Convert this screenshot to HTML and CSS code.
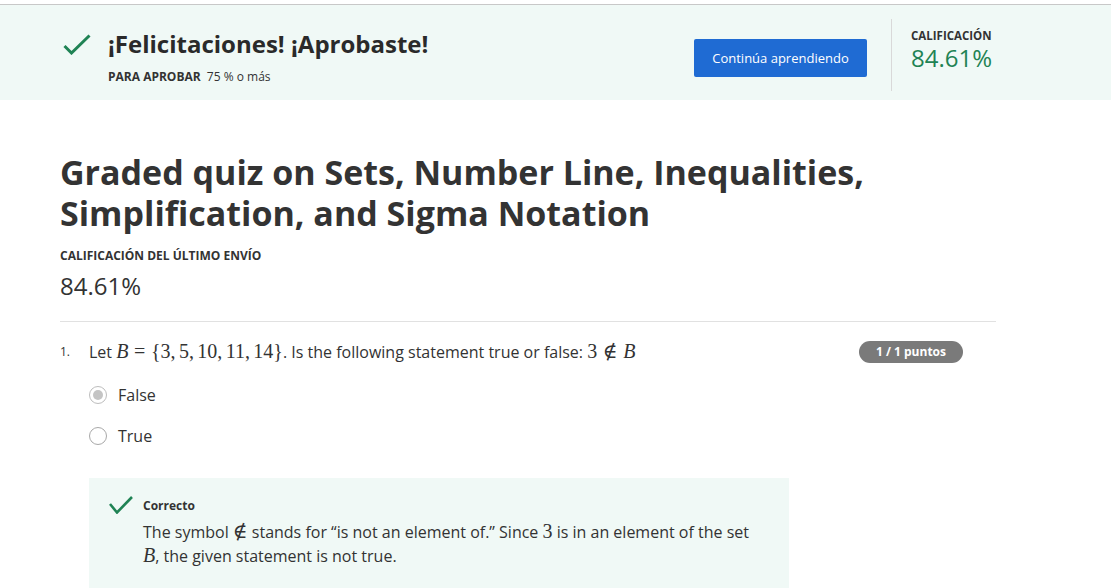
FILE: index.html
```html
<!DOCTYPE html>
<html lang="es">
<head>
<meta charset="utf-8">
<title>Graded quiz</title>
<link rel="stylesheet" href="styles.css">
</head>
<body>
<div class="topline"></div>
<header class="banner">
  <div class="banner-left">
    <svg class="check" width="28" height="21" viewBox="0 0 28 21"><path d="M1.5 12 L8.5 19 L26.5 1.5" fill="none" stroke="#1f8354" stroke-width="3"/></svg>
    <div>
      <h2 class="congrats">¡Felicitaciones! ¡Aprobaste!</h2>
      <div class="pass"><span class="label">PARA APROBAR</span> 75 % o más</div>
    </div>
  </div>
  <button class="btn">Continúa aprendiendo</button>
  <div class="grade">
    <div class="label">CALIFICACIÓN</div>
    <div class="grade-value">84.61%</div>
  </div>
</header>
<main class="content">
  <h1 class="title">Graded quiz on Sets, Number Line, Inequalities, Simplification, and Sigma Notation</h1>
  <div class="label last">CALIFICACIÓN DEL ÚLTIMO ENVÍO</div>
  <div class="last-value">84.61%</div>
  <hr class="sep">
  <section class="question">
    <div class="qnum">1.</div>
    <div class="qbody">
      <div class="qtext">Let <span class="m"><i>B</i><span class="rel">=</span>{3,<span class="th"></span>5,<span class="th"></span>10,<span class="th"></span>11,<span class="th"></span>14}</span>. Is the following statement true or false: <span class="m">3<span class="rel">∉</span><i>B</i></span></div>
      <div class="options">
        <label class="opt"><span class="radio sel"></span>False</label>
        <label class="opt"><span class="radio"></span>True</label>
      </div>
      <div class="feedback">
        <svg class="fcheck" width="24" height="18" viewBox="0 0 24 18"><path d="M1 8 L8 16.5 L23 1" fill="none" stroke="#1f8354" stroke-width="2.6"/></svg>
        <div>
          <div class="fhead">Correcto</div>
          <p class="ftext">The symbol <span class="m">∉</span> stands for “is not an element of.” Since <span class="m">3</span> is in an element of the set <span class="m"><i>B</i></span>, the given statement is not true.</p>
        </div>
      </div>
    </div>
    <div class="badge">1 / 1 puntos</div>
  </section>
</main>
</body>
</html>
```
FILE: styles.css
```css
* { box-sizing: border-box; }
body {
  margin: 0;
  font-family: "Open Sans", "Noto Sans", sans-serif;
  color: #1f1f1f;
  background: #fff;
  overflow: hidden;
}
.topline {
  height: 5px;
  border-bottom: 1px solid #c8c8c8;
}
.banner {
  background: #f0f9f6;
  height: 95px;
  display: flex;
  align-items: flex-start;
  padding: 0 0 0 60px;
}
.banner-left {
  display: flex;
  align-items: flex-start;
  gap: 17px;
  width: 634px;
  padding-top: 24px;
}
.check { margin: 5px 0 0 3px; flex-shrink: 0; }
.congrats {
  margin: 0;
  font-size: 24px;
  font-weight: 700;
  line-height: 30px;
  color: #2a2a2a;
}
.pass {
  margin-top: 10px;
  font-size: 12px;
  line-height: 16px;
  color: #333;
}
.label {
  font-size: 12px;
  font-weight: 700;
  color: #333;
}
.pass .label { margin-right: 3px; }
.btn {
  margin-top: 34px;
  width: 173px;
  height: 38px;
  background: #1f6bd3;
  color: #fff;
  border: none;
  border-radius: 2px;
  font-family: inherit;
  font-size: 13px;
  font-weight: 400;
}
.grade {
  margin-left: 24px;
  margin-top: 14px;
  height: 72px;
  border-left: 1px solid #d9d9d9;
  padding: 10px 0 0 19px;
}
.grade .label { line-height: 14px; font-size: 11.5px; }
.grade-value {
  margin-top: 1px;
  font-size: 24px;
  line-height: 28px;
  color: #1f8354;
}
.content {
  padding: 52px 0 0 60px;
  width: 996px;
}
.title {
  margin: 0;
  font-size: 34px;
  line-height: 41px;
  font-weight: 700;
  color: #333;
  width: 880px;
}
.last { margin-top: 14px; line-height: 16px; }
.last-value {
  font-size: 24px;
  line-height: 32px;
  margin-top: 6px;
  color: #333;
}
.sep {
  border: none;
  border-top: 1px solid #e1e1e1;
  margin: 19px 0 0 0;
}
.question {
  display: flex;
  padding-top: 18px;
}
.qnum {
  width: 29px;
  font-size: 12px;
  line-height: 24px;
  color: #333;
}
.qbody { flex: 1; }
.qtext {
  font-size: 16px;
  line-height: 24px;
  color: #333;
}
.m {
  font-family: "Liberation Serif", "DejaVu Serif", serif;
  font-size: 20px;
  line-height: 1;
}
.m i { font-style: italic; }
.rel { margin: 0 0.28em; }
.th { display: inline-block; width: 0.17em; }
.options {
  margin-top: 20px;
  display: flex;
  flex-direction: column;
  gap: 19px;
}
.opt {
  display: flex;
  align-items: center;
  gap: 11px;
  font-size: 16px;
  line-height: 22px;
  color: #333;
}
.radio {
  width: 18px;
  height: 18px;
  border: 1.5px solid #a8a8a8;
  border-radius: 50%;
  background: #fff;
  display: inline-flex;
  align-items: center;
  justify-content: center;
}
.radio.sel { border-color: #bdbdbd; }
.radio.sel::after {
  content: "";
  width: 10px;
  height: 10px;
  border-radius: 50%;
  background: #c4c4c4;
}
.feedback {
  margin-top: 31px;
  width: 700px;
  background: #f0f9f6;
  padding: 19px 36px 30px 20px;
  display: flex;
  gap: 10px;
}
.fcheck { margin-top: -1px; flex-shrink: 0; }
.fhead {
  font-size: 12px;
  font-weight: 700;
  line-height: 18px;
  color: #333;
}
.ftext {
  margin: 5px 0 0;
  font-size: 16px;
  line-height: 24px;
  color: #333;
}
.badge {
  align-self: flex-start;
  margin: 1px 33px 0 20px;
  width: 104px;
  height: 22px;
  border-radius: 11px;
  background: #7a7a7a;
  color: #fff;
  font-size: 12px;
  font-weight: 700;
  line-height: 22px;
  text-align: center;
  flex-shrink: 0;
}
```
